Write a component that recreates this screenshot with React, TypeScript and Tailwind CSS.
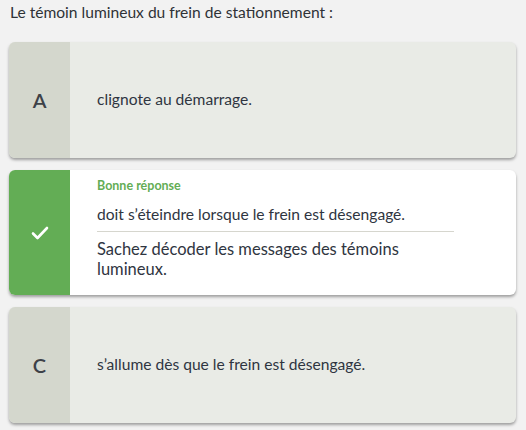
import React from "react";

type Answer = { letter: string; text: string };

function AnswerCard({ letter, text }: Answer) {
  return (
    <div className="flex h-[116px] overflow-hidden rounded-md bg-[#e9ebe6] shadow-[0_2px_3px_rgba(0,0,0,0.35)]">
      <div className="flex w-[61px] shrink-0 items-center justify-center bg-[#d4d7cd] text-[20px] font-semibold text-[#3d4148]">
        {letter}
      </div>
      <div className="flex items-center pl-[27px] text-[15.6px] text-[#2f3541]">{text}</div>
    </div>
  );
}

export default function App() {
  return (
    <div className="min-h-[430px] w-[526px] bg-[#f2f2f2] px-[9px] pt-[2px] font-['Lato',sans-serif]">
      <p className="pl-[1px] text-[15.6px] leading-[20px] text-[#2f3237]">
        Le témoin lumineux du frein de stationnement :
      </p>

      <div className="mt-[20px] flex w-[507px] flex-col gap-[12px]">
        <AnswerCard letter="A" text="clignote au démarrage." />

        {/* bonne réponse */}
        <div className="flex min-h-[125px] overflow-hidden rounded-md bg-white shadow-[0_2px_3px_rgba(0,0,0,0.35)]">
          <div className="flex w-[61px] shrink-0 items-center justify-center bg-[#63ad55]">
            <svg width="18" height="14" viewBox="0 0 18 14" fill="none">
              <path d="M2 7.5l4.5 4.5L16 2" stroke="white" strokeWidth="2.6" strokeLinecap="round" strokeLinejoin="round" />
            </svg>
          </div>
          <div className="flex flex-col pl-[27px] pr-[62px] pt-[8px] pb-[16px]">
            <div className="text-[12.5px] font-bold leading-[16px] text-[#63ad55]">Bonne réponse</div>
            <div className="mt-[10px] border-b border-[#d6d6ce] pb-[7px] text-[15.6px] leading-[20px] text-[#2f3541]">
              doit s’éteindre lorsque le frein est désengagé.
            </div>
            <div className="mt-[7px] text-[16.5px] leading-[20px] text-[#2f3541]">
              Sachez décoder les messages des témoins lumineux.
            </div>
          </div>
        </div>

        <AnswerCard letter="C" text="s’allume dès que le frein est désengagé." />
      </div>
    </div>
  );
}
